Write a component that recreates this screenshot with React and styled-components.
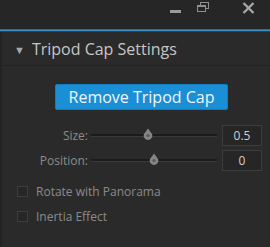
import React, { useState } from "react";
import styled, { createGlobalStyle } from "styled-components";

const Global = createGlobalStyle`
  html, body {
    margin: 0;
    padding: 0;
    background: #262626;
  }
  body {
    font-family: "Open Sans", "Noto Sans", sans-serif;
  }
`;

function Thumb({ pos }) {
  return (
    <ThumbIcon pos={pos} width="10" height="12" viewBox="0 0 10 12">
      <path d="M5 0.5 L9 6 A4.3 4.3 0 1 1 1 6 Z" fill="#858585" />
      <circle cx="5" cy="7.5" r="1.6" fill="#5a5a5a" />
    </ThumbIcon>
  );
}

function SliderRow({ label, value, pos }) {
  return (
    <Row>
      <Label>{label}</Label>
      <Track>
        <Thumb pos={pos} />
      </Track>
      <ValueBox>{value}</ValueBox>
    </Row>
  );
}

export default function App() {
  const [open] = useState(true);

  return (
    <Window>
      <Global />
      <TitleBar>
        <WinButton>
          <svg width="12" height="12" viewBox="0 0 12 12">
            <rect x="1" y="8" width="11" height="3" fill="#9a9a9a" />
          </svg>
        </WinButton>
        <WinButton>
          <svg width="14" height="12" viewBox="0 0 14 12">
            <rect x="4.5" y="0.5" width="8" height="6" fill="none" stroke="#8f8f8f" />
            <rect x="1.5" y="3.5" width="8" height="6" fill="#262626" stroke="#8f8f8f" />
            <line x1="1.5" y1="4.5" x2="9.5" y2="4.5" stroke="#8f8f8f" />
          </svg>
        </WinButton>
        <WinButton wide>
          <svg width="13" height="12" viewBox="0 0 13 12">
            <path d="M1.5 1 L11.5 11 M11.5 1 L1.5 11" stroke="#a5a5a5" strokeWidth="2.4" />
          </svg>
        </WinButton>
      </TitleBar>
      <AccentLine />
      <Panel>
        <Header>
          <Caret>{open ? "▼" : "▶"}</Caret>
          Tripod Cap Settings
        </Header>
        <Body>
          <ButtonRow>
            <PrimaryButton>Remove Tripod Cap</PrimaryButton>
          </ButtonRow>
          <Sliders>
            <SliderRow label="Size:" value="0.5" pos={45} />
            <SliderRow label="Position:" value="0" pos={50} />
          </Sliders>
          <Checks>
            <CheckRow>
              <Box />
              Rotate with Panorama
            </CheckRow>
            <CheckRow>
              <Box />
              Inertia Effect
            </CheckRow>
          </Checks>
        </Body>
      </Panel>
    </Window>
  );
}

const Window = styled.div`
  width: 270px;
  height: 247px;
  background: #262626;
  display: flex;
  flex-direction: column;
  overflow: hidden;
`;

const TitleBar = styled.div`
  height: 29px;
  display: flex;
  justify-content: flex-end;
  align-items: flex-start;
  padding: 0 15px 0 0;
`;

const WinButton = styled.div`
  width: ${(p) => (p.wide ? "38px" : "28px")};
  height: 14px;
  display: flex;
  align-items: center;
  justify-content: ${(p) => (p.wide ? "flex-end" : "center")};
  padding-top: 1px;
`;

const AccentLine = styled.div`
  height: 3px;
  background: #3c8fc4;
  border-top: 1px solid #2c6c96;
  border-bottom: 1px solid #1d4a66;
  box-sizing: border-box;
`;

const Panel = styled.div`
  flex: 1;
  background: #2a2a2a;
  border-left: 2px solid #232323;
  display: flex;
  flex-direction: column;
`;

const Header = styled.div`
  height: 33px;
  border-bottom: 1px solid #222;
  display: flex;
  align-items: center;
  padding-left: 12px;
  font-size: 16px;
  color: #c6c6c6;
`;

const Caret = styled.span`
  font-size: 11px;
  color: #a8a8a8;
  margin-right: 7px;
  position: relative;
  top: 1px;
`;

const Body = styled.div`
  display: flex;
  flex-direction: column;
  padding-top: 18px;
`;

const ButtonRow = styled.div`
  display: flex;
  padding-left: 53px;
`;

const PrimaryButton = styled.button`
  width: 173px;
  height: 26px;
  border: 1px solid #127cc0;
  border-radius: 2px;
  background: #1a8fd5;
  color: #f2f6fa;
  font-family: "Open Sans", "Noto Sans", sans-serif;
  font-size: 16px;
  padding: 0;
  line-height: 22px;
`;

const Sliders = styled.div`
  display: flex;
  flex-direction: column;
  gap: 4px;
  margin-top: 15px;
`;

const Row = styled.div`
  display: flex;
  align-items: center;
  height: 21px;
`;

const Label = styled.div`
  width: 86px;
  text-align: right;
  font-size: 12px;
  color: #8c8c8c;
`;

const Track = styled.div`
  position: relative;
  width: 126px;
  height: 2px;
  margin-left: 3px;
  background: #1b1b1b;
  border-bottom: 1px solid #3a3a3a;
`;

const ThumbIcon = styled.svg`
  position: absolute;
  left: ${(p) => p.pos}%;
  top: -6px;
  transform: translateX(-5px);
`;

const ValueBox = styled.div`
  width: 40px;
  height: 21px;
  box-sizing: border-box;
  margin-left: 5px;
  border: 1px solid #3c3c3c;
  background: #262626;
  color: #cfcfcf;
  font-size: 12px;
  display: flex;
  align-items: center;
  justify-content: center;
`;

const Checks = styled.div`
  display: flex;
  flex-direction: column;
  gap: 13px;
  margin-top: 14px;
  padding-left: 15px;
`;

const CheckRow = styled.div`
  display: flex;
  align-items: center;
  font-size: 12px;
  color: #8a8a8a;
  height: 12px;
`;

const Box = styled.span`
  width: 9px;
  height: 9px;
  border: 1px solid #3d3d3d;
  background: #262626;
  margin-right: 8px;
`;
